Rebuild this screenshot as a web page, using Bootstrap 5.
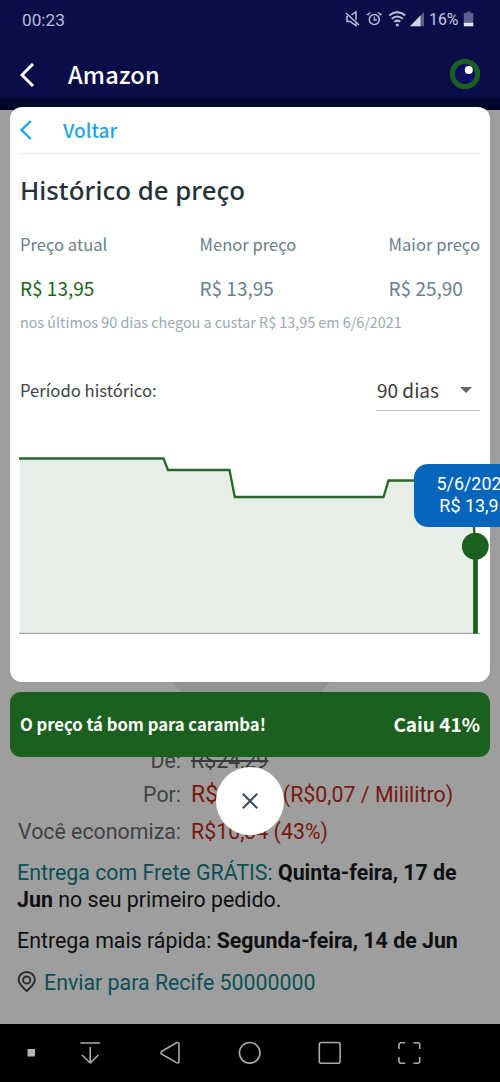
<!DOCTYPE html>
<html lang="pt-BR">
<head>
<meta charset="utf-8">
<meta name="viewport" content="width=device-width, initial-scale=1">
<title>Histórico de preço</title>
<link href="https://cdn.jsdelivr.net/npm/bootstrap@5.3.0/dist/css/bootstrap.min.css" rel="stylesheet">
<style>
body { margin: 0; font-family: Roboto, sans-serif; background: #9e9e9e; }
.screen { width: 500px; height: 1082px; background: #9e9e9e; }
.src { font-family: "Noto Sans CJK JP", sans-serif; }
svg { display: block; flex: none; }

.top-area { height: 110px; background: linear-gradient(#090e49 0 96px, #040833 98px, #030628 110px); }
.status-row { height: 40px; padding: 0 24px 0 22px; color: #b9bcda; font-size: 17.2px; line-height: 39px; }
.app-row { height: 70px; padding: 0 19px 0 20px; color: #fff; }
.app-title { font-size: 23.5px; font-weight: 500; line-height: 68px; height: 70px; margin-left: 33px; letter-spacing: .2px; }

.product { font-size: 21.35px; line-height: 27px; color: #0d0f10; }
.shade { width: 160px; height: 12px; margin-left: 171px; background: #929292; clip-path: polygon(0 0, 100% 0, 93% 100%, 7% 100%); }
.price-row { height: 36px; line-height: 36px; }
.price-label { width: 181px; margin-right: 10px; text-align: right; color: #404343; white-space: pre; }
.old-price { color: #383b3b; }
.red { color: #78180f; }
.deal { font-size: 23px; }
.teal { color: #0a4f57; }
.product b { font-weight: 700; }
.delivery { padding: 0 17px; margin-top: 9px; }

.nav-row { height: 58px; background: #000; }

.overlay { left: 10px; top: 107px; width: 480px; }
.panel { height: 575px; border-radius: 12px; background: #fff; padding: 0 10px; }
.back-row { height: 47px; border-bottom: 1px solid #ececec; color: #1da5e4; font-size: 19.1px; font-weight: 500; line-height: 44px; }
.panel-title { height: 72px; font: 500 25.85px/72px "Noto Sans", sans-serif; color: #263038; margin: 0; }
.stat-name { font-size: 16.6px; line-height: 36px; height: 38px; color: #6a808c; }
.stat-value { font-size: 19px; line-height: 48px; height: 49px; color: #6a808c; }
.stat-value.now { color: #1b6420; }
.note { font-size: 14.33px; line-height: 18px; height: 18px; color: #9aa8b0; white-space: nowrap; }
.period-row { height: 38px; margin-top: 42px; }
.period-label { font-size: 16.65px; line-height: 34px; color: #3c434a; }
.period-pick { width: 104px; border-bottom: 1px solid #c4c4c4; font-size: 19px; line-height: 34px; color: #3a3a3a; padding: 0 8px 3px 1px; }
.chart { margin: 0 -10px; }
.tip { left: 404px; top: 52.5px; width: 120px; height: 63px; border-radius: 14px; background: #0466ba; color: #fff; font-size: 17.9px; line-height: 22.5px; padding-top: 9px; font-family: Roboto, sans-serif; }
.verdict { height: 65px; margin-top: 10px; border-radius: 11px; background: #1c601f; color: #fff; padding: 0 10px; font-weight: 700; font-size: 16.65px; line-height: 64.500px; }
.verdict .drop { font-size: 19px; line-height: 63px; }
.close-btn { width: 68px; height: 68px; margin: 10px auto 0; background: #fff; }
</style>
</head>
<body>
<div class="screen position-relative overflow-hidden d-flex flex-column">
  <header class="top-area">
    <div class="status-row d-flex justify-content-between align-items-center">
      <span>00:23</span>
      <svg width="156" height="24" viewBox="320 8 156 24" fill="none" stroke="#b9bcda">
        <path d="M346 13l13 12M348 16.500h-1v5h3l6 4v-4M351.500 15l4.500-3v8" stroke-width="1.500"/>
        <circle cx="374.300" cy="19.500" r="5" stroke-width="1.500"/>
        <path d="M374.300 16.500v3.500h2.500M369 15l-1.500-.5 3-2M379.500 15l1.500-.5-3-2" stroke-width="1.300"/>
        <path d="M389.300 15.500Q397.300 8.800 405.300 15.500M391.800 18.800Q397.300 14.200 402.800 18.800M394.300 21.800Q397.300 19.500 400.300 21.800" stroke-width="2"/>
        <circle cx="397.300" cy="25" r="1.600" fill="#b9bcda" stroke="none"/>
        <path d="M410 26.300L424 12v14.300z" fill="#5c608d" stroke="none"/>
        <path d="M410 26.300L420.500 15.600v10.700z" fill="#d2d4e6" stroke="none"/>
        <path d="M467 11.500h4v1.500h2.500v9h-9.500v-9h3z" transform="translate(-.2)" fill="#5c608d" stroke="none"/>
        <path d="M463.800 22.500h9.500v3.800h-9.500z" fill="#e4e5f0" stroke="none"/>
        <text x="429" y="25.300" font-size="15.800" fill="#c6c9e2" stroke="none">16%</text>
      </svg>
    </div>
    <div class="app-row d-flex align-items-center">
      <svg width="15" height="24" viewBox="0 0 15 24" fill="none" stroke="#fff" stroke-width="3"><path d="M13 1L2 12l11 11"/></svg>
      <span class="app-title src">Amazon</span>
      <svg class="ms-auto" width="32" height="32" viewBox="0 0 32 32"><circle cx="16" cy="15" r="12.700" fill="#0d0f63" stroke="#1c601f" stroke-width="5"/><circle cx="19.800" cy="11" r="4" fill="#fff"/></svg>
    </div>
  </header>

  <main class="product flex-grow-1 d-flex flex-column">
    <div class="shade" style="margin-top:571px"></div>
    <div class="price-row d-flex" style="margin-top:50px"><span class="price-label">De:</span><s class="old-price">R$24,29</s></div>
    <div class="price-row d-flex" style="margin-top:-2px"><span class="price-label">Por:</span><span class="red deal">R$13,95</span><span class="red" style="margin-left:8.500px">(R$0,07 / Mililitro)</span></div>
    <div class="price-row d-flex" style="margin-top:1px"><span class="price-label">Você economiza:</span><span class="red">R$10,34 (43%)</span></div>
    <div class="delivery">
      <div><span class="teal">Entrega com Frete GRÁTIS:</span> <b>Quinta-feira, 17 de<br>Jun</b> no seu primeiro pedido.</div>
      <div style="margin-top:13.500px">Entrega mais rápida: <b>Segunda-feira, 14 de Jun</b></div>
      <div class="teal d-flex align-items-center" style="margin-top:15px">
        <svg width="20" height="22" viewBox="0 0 20 22" fill="none" stroke="#2b2e2e" stroke-width="2"><path d="M9.700 20C6 16.500 1.500 13 1.500 8.800A8.200 7.800 0 0 1 17.900 8.800C17.900 13 13.500 16.500 9.700 20z"/><circle cx="9.700" cy="9" r="3.600"/></svg>
        <span style="margin-left:7px">Enviar para Recife 50000000</span>
      </div>
    </div>
  </main>

  <nav class="nav-row">
    <svg width="500" height="58" viewBox="0 1024 500 58" fill="none" stroke="#aaa" stroke-width="1.600" stroke-linejoin="round">
      <rect x="27.500" y="1049" width="7.500" height="7.500" fill="#b4b4b4" stroke="none"/>
      <path d="M80.500 1043h19.500M90.200 1047v16M82 1055l8.200 8 8.200-8"/>
      <path d="M176.500 1042.800q2.500-1 2.500 1.500v17q0 2.500-2.500 1.300l-15-8.600q-1.500-1.300 0-2.500z"/>
      <circle cx="249.700" cy="1052.800" r="10.300"/>
      <rect x="319.300" y="1042.500" width="20.800" height="20.800" rx="2"/>
      <path d="M399 1049v-4q0-2.200 2.200-2.200h4M413.500 1042.800h4q2.200 0 2.200 2.200v4M419.700 1057v4q0 2.200-2.200 2.200h-4M405.200 1063.200h-4q-2.200 0-2.200-2.200v-4"/>
    </svg>
  </nav>

  <div class="overlay position-absolute src">
    <section class="panel">
      <div class="back-row d-flex align-items-center">
        <svg width="12" height="20" viewBox="0 0 12 20" fill="none" stroke="#1da5e4" stroke-width="2.400"><path d="M10.800 1L1.500 10l9.300 9"/></svg>
        <span style="margin-left:31px">Voltar</span>
      </div>
      <h1 class="panel-title">Histórico de preço</h1>
      <div class="d-flex justify-content-between">
        <div><div class="stat-name">Preço atual</div><div class="stat-value now">R$ 13,95</div></div>
        <div><div class="stat-name">Menor preço</div><div class="stat-value">R$ 13,95</div></div>
        <div><div class="stat-name">Maior preço</div><div class="stat-value">R$ 25,90</div></div>
      </div>
      <div class="note">nos últimos 90 dias chegou a custar R$ 13,95 em 6/6/2021</div>
      <div class="period-row d-flex justify-content-between">
        <span class="period-label">Período histórico:</span>
        <div class="period-pick d-flex justify-content-between align-items-center">
          <span>90 dias</span>
          <svg width="12" height="6" viewBox="0 0 12 6"><path d="M0 0h12L6 6z" fill="#666"/></svg>
        </div>
      </div>
      <div class="chart position-relative">
        <svg width="480" height="240" viewBox="10 411 480 240">
          <path d="M20 458.500H163.500L168 470H229.500L234.800 497H383.500L388.500 480.500H470L475.500 546H478V633H20z" fill="#e7eee7"/>
          <path d="M19 633.400H480" stroke="#a3a8a3" stroke-width="1.200"/>
          <path d="M19 458.500H163.500L168 470H229.500L234.800 497H383.500L388.500 480.500H470L475.500 546" fill="none" stroke="#26682b" stroke-width="2.300"/>
          <path d="M475.500 546V633.500" stroke="#1c601f" stroke-width="4.800"/>
          <circle cx="475.300" cy="546.200" r="13.400" fill="#1c601f"/>
        </svg>
        <div class="tip position-absolute text-center">5/6/2021<br>R$ 13,95</div>
      </div>
    </section>
    <div class="verdict d-flex justify-content-between"><span>O preço tá bom para caramba!</span><span class="drop">Caiu 41%</span></div>
    <div class="close-btn rounded-circle d-flex align-items-center justify-content-center">
      <svg width="16" height="16" viewBox="0 0 16 16" stroke="#3e505c" stroke-width="2.200"><path d="M.8.800l14.400 14.400M15.200.8L.8 15.200"/></svg>
    </div>
  </div>
</div>
<script src="https://cdn.jsdelivr.net/npm/bootstrap@5.3.0/dist/js/bootstrap.bundle.min.js"></script>
</body>
</html>
